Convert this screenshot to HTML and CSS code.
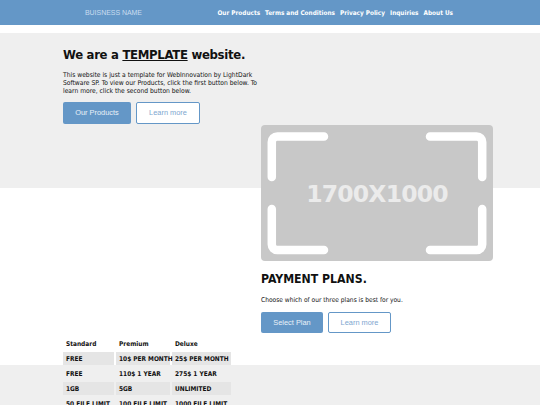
FILE: index.html
```html
<!DOCTYPE html>
<html lang="en">
<head>
<meta charset="utf-8">
<title>Buisness Name</title>
<link rel="stylesheet" href="styles.css">
</head>
<body>
<header class="nav">
  <div class="nav-inner">
    <a class="brand" href="#">BUISNESS NAME</a>
    <nav class="links">
      <a href="#">Our Products</a>
      <a href="#">Terms and Conditions</a>
      <a href="#">Privacy Policy</a>
      <a href="#">Inquiries</a>
      <a href="#">About Us</a>
    </nav>
  </div>
</header>

<section class="hero">
  <div class="container">
    <div class="hero-text">
      <h1>We are a <u>TEMPLATE</u> website.</h1>
      <p>This website is just a template for WebInnovation by LightDark Software SP. To view our Products, click the first button below. To learn more, click the second button below.</p>
      <div class="buttons">
        <a class="btn btn-fill btn-a" href="#">Our Products</a>
        <a class="btn btn-line btn-b" href="#">Learn more</a>
      </div>
    </div>
    <div class="placeholder">
      <svg class="brackets" viewBox="0 0 232 136" width="232" height="136" aria-hidden="true">
        <g fill="none" stroke="#ffffff" stroke-width="8.5" stroke-linecap="round" stroke-linejoin="round">
          <path d="M10.8 52 V17 A5.5 5.5 0 0 1 16.3 11.5 H63"/>
          <path d="M169 11.5 H215.7 A5.5 5.5 0 0 1 221.2 17 V52"/>
          <path d="M10.8 84 V119.5 A5.5 5.5 0 0 0 16.3 125 H63"/>
          <path d="M169 125 H215.7 A5.5 5.5 0 0 0 221.2 119.5 V84"/>
        </g>
      </svg>
      <span class="ph-label">1700X1000</span>
    </div>
  </div>
</section>

<section class="plans">
  <div class="container">
    <table class="price">
      <thead>
        <tr><th class="c1">Standard</th><th class="c2">Premium</th><th class="c3">Deluxe</th></tr>
      </thead>
      <tbody>
        <tr class="odd"><td>FREE</td><td>10$ PER MONTH</td><td>25$ PER MONTH</td></tr>
        <tr><td>FREE</td><td>110$ 1 YEAR</td><td>275$ 1 YEAR</td></tr>
        <tr class="odd"><td>1GB</td><td>5GB</td><td>UNLIMITED</td></tr>
        <tr><td>50 FILE LIMIT</td><td>100 FILE LIMIT</td><td>1000 FILE LIMIT</td></tr>
      </tbody>
    </table>
    <div class="plans-text">
      <h2>PAYMENT PLANS.</h2>
      <p>Choose which of our three plans is best for you.</p>
      <div class="buttons">
        <a class="btn btn-fill btn-c" href="#">Select Plan</a>
        <a class="btn btn-line btn-d" href="#">Learn more</a>
      </div>
    </div>
  </div>
</section>

<section class="band"></section>
</body>
</html>
```

FILE: styles.css
```css
* { box-sizing: border-box; }
html, body { margin: 0; padding: 0; }
body {
  width: 540px;
  height: 405px;
  overflow: hidden;
  background: #ffffff;
  color: #111111;
  font-family: "DejaVu Sans Condensed", "DejaVu Sans", sans-serif;
}
a { text-decoration: none; }

.nav {
  height: 25px;
  background: #6497c7;
  margin-bottom: 8px;
}
.nav-inner {
  display: flex;
  align-items: center;
  height: 25px;
  padding-left: 85px;
  width: 453px;
  justify-content: space-between;
}
.brand {
  font-family: "Liberation Sans", Arial, sans-serif;
  font-size: 7px;
  color: #c9dcef;
  letter-spacing: -0.05px;
}
.links {
  display: flex;
  gap: 5px;
}
.links a {
  color: #ffffff;
  font-size: 6.4px;
  font-weight: bold;
}

.container {
  display: grid;
  grid-template-columns: 198px 232px;
  align-items: start;
  margin-left: 63px;
  width: 430px;
}

.hero {
  height: 155px;
  background: #efefef;
}
.hero-text {
  padding-top: 13.5px;
}
h1 {
  margin: 0;
  font-size: 13px;
  line-height: 16px;
  letter-spacing: -0.3px;
  font-weight: bold;
  white-space: nowrap;
}
.hero-text p {
  margin: 9.6px 0 0;
  width: 205px;
  font-size: 6.7px;
  line-height: 7.8px;
}
.buttons {
  display: flex;
  gap: 5px;
}
.hero-text .buttons { margin-top: 6.5px; }
.btn {
  display: flex;
  align-items: center;
  justify-content: center;
  height: 22px;
  border-radius: 2px;
  font-family: "Liberation Sans", Arial, sans-serif;
  font-size: 7.4px;
}
.btn-fill {
  background: #6497c7;
  color: #eaf1f8;
}
.btn-line {
  background: #ffffff;
  border: 1px solid #6497c7;
  color: #7ea6cf;
}
.btn-a { width: 68px; }
.btn-b { width: 64px; }
.btn-c { width: 62px; height: 21px; }
.btn-d { width: 63px; height: 21px; }

.placeholder {
  position: relative;
  z-index: 1;
  width: 232px;
  height: 136px;
  margin-top: 92px;
  background: #c8c8c8;
  border-radius: 4px;
  display: flex;
  align-items: center;
  justify-content: center;
}
.brackets {
  position: absolute;
  left: 0;
  top: 0;
}
.ph-label {
  position: relative;
  font-family: "DejaVu Sans", sans-serif;
  font-weight: bold;
  font-size: 23.5px;
  color: #ebebeb;
  letter-spacing: -0.8px;
  margin-top: 1px;
}

.plans {
  height: 177px;
  background: #ffffff;
}
.price {
  position: relative;
  z-index: 1;
  margin-top: 148px;
  margin-left: -2px;
  border-spacing: 2px;
  font-size: 6.5px;
  table-layout: fixed;
  width: 172px;
}
.price .c1 { width: 51px; }
.price .c2 { width: 54px; }
.price .c3 { width: 59px; }
.price th {
  text-align: left;
  font-weight: bold;
  height: 12px;
  padding: 0 3px;
  color: #111111;
}
.price td {
  height: 13px;
  padding: 0 3px;
  font-weight: bold;
  white-space: nowrap;
  color: #111111;
}
.price tr.odd td { background: #e5e5e5; }

.plans-text {
  padding-top: 84.3px;
}
h2 {
  margin: 0;
  font-size: 12.2px;
  line-height: 15px;
  font-weight: bold;
}
.plans-text p {
  margin: 8.5px 0 0;
  font-size: 6.6px;
  line-height: 8px;
  white-space: nowrap;
}
.plans-text .buttons { margin-top: 8.5px; }

.band {
  height: 60px;
  background: #efefef;
}
```
